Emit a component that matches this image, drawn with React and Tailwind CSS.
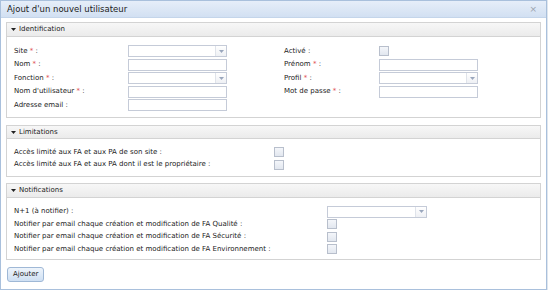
import React from "react";

const font = { fontFamily: '"DejaVu Sans", Verdana, sans-serif' };

function Req() {
  return <span className="text-[#e0504f]">*</span>;
}

function TextField({ w = "w-[99px]" }) {
  return <div className={`h-[12px] ${w} border border-[#c5cbd8] bg-white`} />;
}

function Combo({ w = "w-[99px]" }) {
  return (
    <div className={`flex h-[12px] ${w} border border-[#c5cbd8] bg-white`}>
      <div className="flex-1" />
      <div className="flex w-[11px] items-center justify-center border-l border-[#dfe3ea] bg-gradient-to-b from-white to-[#eef0f4]">
        <svg width="5" height="3" viewBox="0 0 5 3">
          <path d="M0 0h5L2.5 3z" fill="#9aa7bd" />
        </svg>
      </div>
    </div>
  );
}

function Check() {
  return <div className="h-[10px] w-[10px] border border-[#b8bfcc] bg-gradient-to-b from-[#f4f6fa] to-[#e2e7ef]" />;
}

function Fieldset({ title, children, className = "", headH = "h-[14px]" }) {
  return (
    <div className={`border border-[#d3d3d3] bg-white ${className}`}>
      <div className={`flex ${headH} items-center gap-[3px] border-b border-[#d3d3d3] bg-gradient-to-b from-[#f7f7f7] to-[#ebebeb] pl-[4px] text-[7px] text-[#222]`}>
        <svg width="5" height="3" viewBox="0 0 5 3">
          <path d="M0 0h5L2.5 3z" fill="#222" />
        </svg>
        {title}
      </div>
      {children}
    </div>
  );
}

function Row({ label, children, labelW }) {
  return (
    <div className="flex h-[12px] items-center">
      <div className={`${labelW} text-[7px] text-[#222]`}>{label}</div>
      {children}
    </div>
  );
}

export default function App() {
  return (
    <div className="h-[290px] w-[548px] bg-[#dfe6ee]" style={font}>
      <div className="flex h-[290px] w-[547px] flex-col border border-[#a9c0dc] bg-white">
        <div className="flex h-[17px] items-center justify-between border-b border-[#c4d5ea] bg-gradient-to-b from-[#e6eef9] to-[#d2e0f2] pl-[6px] pr-[9px]">
          <span className="text-[8.5px] text-[#1c1c1c]">Ajout d'un nouvel utilisateur</span>
          <span className="text-[9px] leading-none text-[#9aa3ad]">×</span>
        </div>

        <div className="flex flex-col px-[5px] pt-[4px]">
          <Fieldset title="Identification">
            <div className="flex pb-[6px] pl-[7px] pt-[8px]">
              <div className="flex w-[270px] flex-col gap-[1.5px]">
                <Row label={<>Site <Req /> :</>} labelW="w-[114px]"><Combo /></Row>
                <Row label={<>Nom <Req /> :</>} labelW="w-[114px]"><TextField /></Row>
                <Row label={<>Fonction <Req /> :</>} labelW="w-[114px]"><Combo /></Row>
                <Row label={<>Nom d'utilisateur <Req /> :</>} labelW="w-[114px]"><TextField /></Row>
                <Row label={<>Adresse email :</>} labelW="w-[114px]"><TextField /></Row>
              </div>
              <div className="flex flex-col gap-[1.5px]">
                <Row label={<>Activé :</>} labelW="w-[95px]"><Check /></Row>
                <Row label={<>Prénom <Req /> :</>} labelW="w-[95px]"><TextField /></Row>
                <Row label={<>Profil <Req /> :</>} labelW="w-[95px]"><Combo /></Row>
                <Row label={<>Mot de passe <Req /> :</>} labelW="w-[95px]"><TextField /></Row>
              </div>
            </div>
          </Fieldset>

          <Fieldset title="Limitations" className="mt-[7px]" headH="h-[13px]">
            <div className="flex flex-col gap-[0.5px] pb-[5px] pl-[7px] pt-[7px]">
              <Row label="Accès limité aux FA et aux PA de son site :" labelW="w-[260px]"><Check /></Row>
              <Row label="Accès limité aux FA et aux PA dont il est le propriétaire :" labelW="w-[260px]"><Check /></Row>
            </div>
          </Fieldset>

          <Fieldset title="Notifications" className="mt-[6px]">
            <div className="flex flex-col gap-[0.5px] pb-[4px] pl-[7px] pt-[8px]">
              <Row label="N+1 (à notifier) :" labelW="w-[313px]"><Combo w="w-[100px]" /></Row>
              <Row label="Notifier par email chaque création et modification de FA Qualité :" labelW="w-[313px]"><Check /></Row>
              <Row label="Notifier par email chaque création et modification de FA Sécurité :" labelW="w-[313px]"><Check /></Row>
              <Row label="Notifier par email chaque création et modification de FA Environnement :" labelW="w-[313px]"><Check /></Row>
            </div>
          </Fieldset>

          <div className="flex pl-[1px] pt-[7px]">
            <button className="flex h-[15px] items-center rounded-[3px] border border-[#9fb8d6] bg-gradient-to-b from-[#eef4fb] to-[#cfe0f3] px-[5px] text-[7px] text-[#222]">
              Ajouter
            </button>
          </div>
        </div>
      </div>
    </div>
  );
}
